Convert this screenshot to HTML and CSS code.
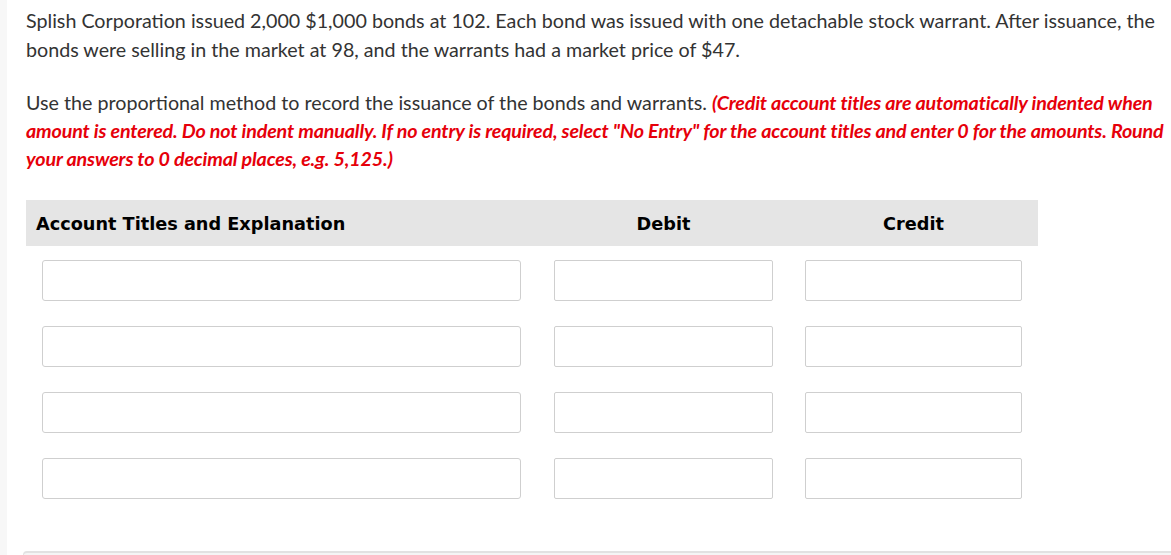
FILE: index.html
```html
<!DOCTYPE html>
<html lang="en">
<head>
<meta charset="utf-8">
<link rel="stylesheet" href="styles.css">
</head>
<body>
<div class="page">
  <div class="strip"></div>
  <main class="content">
    <p class="q">Splish Corporation issued 2,000 $1,000 bonds at 102. Each bond was issued with one detachable stock warrant. After issuance, the bonds were selling in the market at 98, and the warrants had a market price of $47.</p>
    <p class="q inst">Use the proportional method to record the issuance of the bonds and warrants. <em class="red">(Credit account titles are automatically indented when amount is entered. Do not indent manually. If no entry is required, select "No Entry" for the account titles and enter 0 for the amounts. Round your answers to 0 decimal places, e.g. 5,125.)</em></p>
    <div class="journal">
      <div class="head">
        <div class="h-acct">Account Titles and Explanation</div>
        <div class="h-num">Debit</div>
        <div class="h-num">Credit</div>
      </div>
      <div class="rows">
        <div class="cell"><div class="box box-acct"></div></div>
        <div class="cell"><div class="box"></div></div>
        <div class="cell"><div class="box"></div></div>
        <div class="cell"><div class="box box-acct"></div></div>
        <div class="cell"><div class="box"></div></div>
        <div class="cell"><div class="box"></div></div>
        <div class="cell"><div class="box box-acct"></div></div>
        <div class="cell"><div class="box"></div></div>
        <div class="cell"><div class="box"></div></div>
        <div class="cell"><div class="box box-acct"></div></div>
        <div class="cell"><div class="box"></div></div>
        <div class="cell"><div class="box"></div></div>
      </div>
    </div>
    <div class="footer-box"></div>
  </main>
</div>
</body>
</html>
```

FILE: styles.css
```css
html, body {
  margin: 0;
  padding: 0;
  background: #fff;
}
.page {
  display: flex;
  height: 555px;
  overflow: hidden;
}
.strip {
  width: 7px;
  flex: none;
  background: #f7f7f7;
}
.content {
  width: 1145px;
  padding-left: 19px;
  font-family: Lato, "Liberation Sans", sans-serif;
  font-size: 19.7px;
  color: #333;
}
.q {
  margin: 6px 0 0;
  line-height: 29px;
}
.inst {
  margin-top: 25px;
  line-height: 28px;
}
.red {
  color: #e6000a;
  font-weight: 700;
  font-style: italic;
  letter-spacing: -0.15px;
}
.journal {
  margin-top: 27px;
  width: 1012px;
}
.head {
  display: grid;
  grid-template-columns: 512px 251px 249px;
  align-items: center;
  height: 46px;
  background: #e5e5e5;
  font-family: "DejaVu Sans", Verdana, sans-serif;
  font-weight: 700;
  font-size: 17.7px;
  color: #000;
}
.h-acct {
  padding-left: 10px;
  padding-top: 2px;
}
.h-num {
  text-align: center;
  padding-top: 2px;
}
.rows {
  display: grid;
  grid-template-columns: 512px 251px 249px;
  row-gap: 25px;
  padding-top: 14px;
}
.cell {
  padding: 0 16px;
}
.box {
  height: 39px;
  border: 1px solid #cfcfcf;
  border-radius: 2px;
  background: #fff;
}
.box-acct {
  margin-right: 1px;
  border-radius: 3px;
}
.footer-box {
  margin-top: 52px;
  margin-left: -3px;
  height: 2px;
  border-top: 2px solid #e2e2e2;
  border-left: 1px solid #e2e2e2;
  border-radius: 5px 0 0 0;
  background: #f5f5f5;
}
```
